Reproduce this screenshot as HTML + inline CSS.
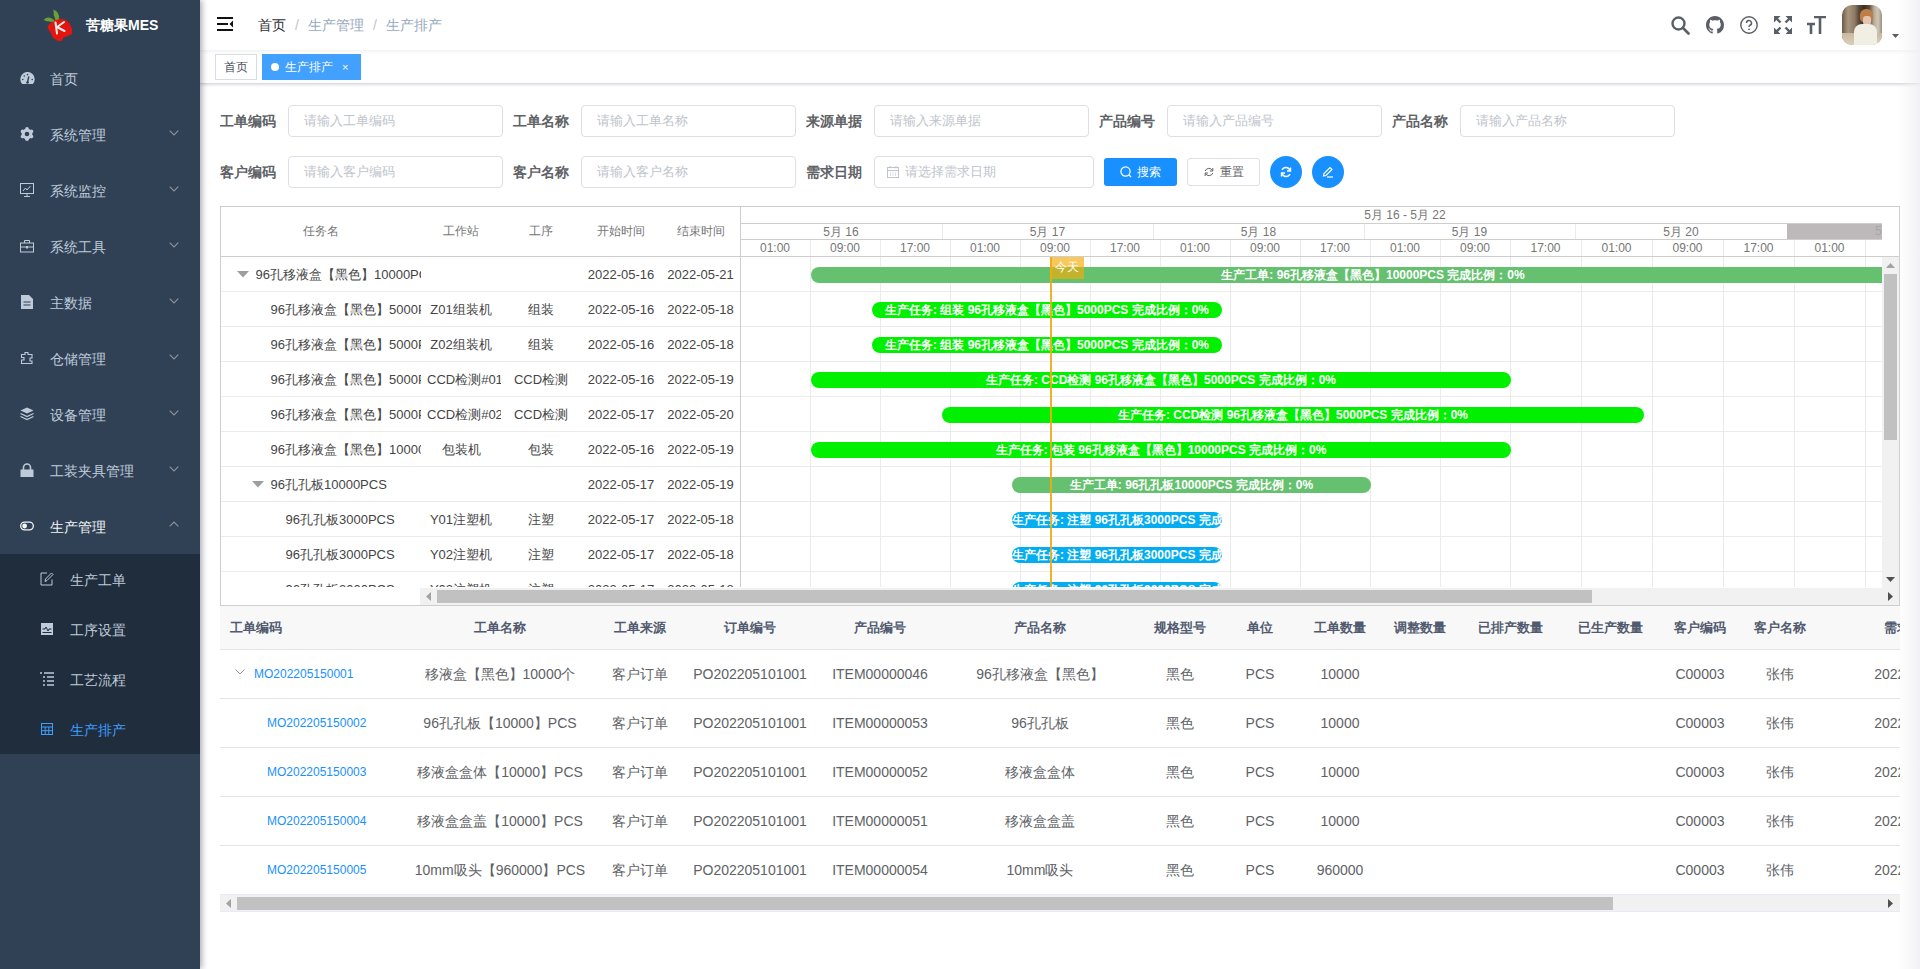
<!DOCTYPE html><html><head><meta charset="utf-8"><style>
*{margin:0;padding:0;box-sizing:border-box}
html,body{width:1920px;height:969px;overflow:hidden;background:#fff;font-family:"Liberation Sans",sans-serif;color:#606266;font-size:14px}
.a{position:absolute}
.nw{white-space:nowrap}
#side{position:absolute;left:0;top:0;width:200px;height:969px;background:#304156;box-shadow:2px 0 6px rgba(0,21,41,.35);z-index:5}
.mi{position:absolute;left:0;width:200px;height:56px;color:#bfcbd9;font-size:14px;line-height:56px}
.mi .t{position:absolute;left:50px;top:1px}
.mi svg.ic{position:absolute;left:20px;top:21px}
.mi .arr{position:absolute;left:169px;top:24px;width:10px;height:6px}
.smi{position:absolute;left:0;width:200px;height:50px;color:#bfcbd9;font-size:14px;line-height:50px}
.smi .t{position:absolute;left:70px;top:1px}
.smi svg.ic{position:absolute;left:40px;top:18px}
#nav{position:absolute;left:200px;top:0;width:1720px;height:50px;background:#fff;box-shadow:0 1px 4px rgba(0,21,41,.08);z-index:3}
#tags{position:absolute;left:200px;top:50px;width:1720px;height:34px;background:#fff;border-bottom:1px solid #d8dce5;box-shadow:0 1px 3px 0 rgba(0,0,0,.12),0 0 3px 0 rgba(0,0,0,.04);z-index:2}
.lbl{position:absolute;font-weight:bold;font-size:14px;color:#606266;line-height:32px;white-space:nowrap}
.inp{position:absolute;height:32px;border:1px solid #dcdfe6;border-radius:4px;background:#fff;font-size:13px;color:#c0c4cc;line-height:30px;padding-left:15px;white-space:nowrap}
.g{position:absolute;overflow:hidden}
.gh{color:#767676;font-size:12px;position:absolute;white-space:nowrap}
.gc{color:#454545;font-size:13px;position:absolute;white-space:nowrap;overflow:hidden}
.bar{position:absolute;height:16px;border-radius:8px;color:#fff;font-weight:bold;font-size:12px;line-height:16px;text-align:center;white-space:nowrap;overflow:hidden}
.th{position:absolute;font-weight:bold;font-size:13px;color:#515a6e;white-space:nowrap;line-height:43px}
.td{position:absolute;font-size:14px;color:#606266;white-space:nowrap;line-height:50px}
</style></head><body>
<div id="side">
<svg class="a" style="left:38px;top:5px" width="40" height="40" viewBox="0 0 40 40">
<path d="M11 19.5 L16 15 L21 13.5 L28 15 L32 19 L34 24 L34 29 L30 31 L25.5 32.5 L24 36 L20 36 L15 33 L12.5 27.5 L10 23.5 L9.5 21Z" fill="#e2160f"/>
<path d="M15.5 4.5 Q21.5 7 21 13.5 Q19.5 15.5 17.5 15 Q15 10 15.5 4.5Z" fill="#66a336"/>
<path d="M5.5 15 Q10 10.5 15.5 14.5 L16.5 16.5 Q10 17.5 5.5 15Z" fill="#66a336"/>
<path d="M17.5 17.5 L19 28.5 M18.5 22.5 L26 17 M19 22 L26.5 26" stroke="#f3eeee" stroke-width="2" fill="none" stroke-linecap="round"/>
</svg>
<div class="a nw" style="left:86px;top:16px;color:#fff;font-weight:bold;font-size:14px;line-height:18px">苦糖果MES</div>
<div class="mi" style="top:50px"><svg class="ic" style="top:22px" width="15" height="13" viewBox="0 0 15 13"><path d="M2.2 12 A7.2 7.2 0 1 1 12.8 12 Z" fill="#bfcbd9"/><path d="M7.5 10.5 L8.8 4.5" stroke="#304156" stroke-width="1.4"/><circle cx="7.5" cy="10.5" r="1.3" fill="#304156"/><circle cx="2.8" cy="7.5" r=".8" fill="#304156"/><circle cx="4.3" cy="4" r=".8" fill="#304156"/><circle cx="12.2" cy="7.5" r=".8" fill="#304156"/><circle cx="7.5" cy="2.6" r=".8" fill="#304156"/></svg><span class="t">首页</span></div>
<div class="mi" style="top:106px"><svg class="ic" width="14" height="14" viewBox="0 0 14 14"><circle cx="7" cy="7" r="5.4" fill="#bfcbd9"/><g fill="#bfcbd9"><circle cx="7" cy="1.8" r="1.8"/><circle cx="7" cy="12.2" r="1.8"/><circle cx="2.5" cy="4.4" r="1.8"/><circle cx="11.5" cy="4.4" r="1.8"/><circle cx="2.5" cy="9.6" r="1.8"/><circle cx="11.5" cy="9.6" r="1.8"/></g><circle cx="7" cy="7" r="2.3" fill="#304156"/></svg><span class="t">系统管理</span><svg class="arr" viewBox="0 0 10 6"><path d="M0.7 0.7 L5 5 L9.3 0.7" fill="none" stroke="#909399" stroke-width="1.1"/></svg></div>
<div class="mi" style="top:162px"><svg class="ic" width="14" height="14" viewBox="0 0 14 14"><rect x="0.5" y="0.5" width="13" height="10" fill="none" stroke="#bfcbd9"/><path d="M3 8 L5.5 5 L7 7 L10.5 3" stroke="#bfcbd9" fill="none"/><path d="M7 11 V13 M4 13.5 H10" stroke="#bfcbd9"/></svg><span class="t">系统监控</span><svg class="arr" viewBox="0 0 10 6"><path d="M0.7 0.7 L5 5 L9.3 0.7" fill="none" stroke="#909399" stroke-width="1.1"/></svg></div>
<div class="mi" style="top:218px"><svg class="ic" width="14" height="14" viewBox="0 0 14 14"><rect x="0.5" y="4" width="13" height="9" fill="none" stroke="#bfcbd9"/><path d="M4.5 4 V1.5 H9.5 V4 M0.5 8 H13.5" stroke="#bfcbd9" fill="none"/><rect x="6" y="7" width="2" height="2.5" fill="#bfcbd9"/></svg><span class="t">系统工具</span><svg class="arr" viewBox="0 0 10 6"><path d="M0.7 0.7 L5 5 L9.3 0.7" fill="none" stroke="#909399" stroke-width="1.1"/></svg></div>
<div class="mi" style="top:274px"><svg class="ic" width="14" height="14" viewBox="0 0 14 14"><path d="M1 0 H9 L13 4 V14 H1Z" fill="#bfcbd9"/><path d="M3.5 7 H10.5 M3.5 10 H10.5" stroke="#304156" stroke-width="1.2"/></svg><span class="t">主数据</span><svg class="arr" viewBox="0 0 10 6"><path d="M0.7 0.7 L5 5 L9.3 0.7" fill="none" stroke="#909399" stroke-width="1.1"/></svg></div>
<div class="mi" style="top:330px"><svg class="ic" width="14" height="14" viewBox="0 0 14 14"><path d="M1.5 3.5 H5 V1.5 H8 V3.5 H12 V7 H10 V10 H12 V12.5 H1.5 V9 H4 V6.5 H1.5Z" fill="none" stroke="#bfcbd9" stroke-width="1.1"/></svg><span class="t">仓储管理</span><svg class="arr" viewBox="0 0 10 6"><path d="M0.7 0.7 L5 5 L9.3 0.7" fill="none" stroke="#909399" stroke-width="1.1"/></svg></div>
<div class="mi" style="top:386px"><svg class="ic" width="14" height="14" viewBox="0 0 14 14"><path d="M7 0.5 L13.5 3.5 L7 6.5 L0.5 3.5Z" fill="#bfcbd9"/><path d="M0.5 6.5 L7 9.5 L13.5 6.5 M0.5 9.5 L7 12.5 L13.5 9.5" stroke="#bfcbd9" fill="none" stroke-width="1.3"/></svg><span class="t">设备管理</span><svg class="arr" viewBox="0 0 10 6"><path d="M0.7 0.7 L5 5 L9.3 0.7" fill="none" stroke="#909399" stroke-width="1.1"/></svg></div>
<div class="mi" style="top:442px"><svg class="ic" width="14" height="14" viewBox="0 0 14 14"><path d="M3.5 7 V4.5 A3.5 3.5 0 0 1 10.5 4.5 V7" stroke="#bfcbd9" stroke-width="1.6" fill="none"/><rect x="0.5" y="6.5" width="13" height="7.5" fill="#bfcbd9"/></svg><span class="t">工装夹具管理</span><svg class="arr" viewBox="0 0 10 6"><path d="M0.7 0.7 L5 5 L9.3 0.7" fill="none" stroke="#909399" stroke-width="1.1"/></svg></div>
<div class="mi" style="top:498px;color:#f4f4f5"><svg class="ic" width="14" height="14" viewBox="0 0 14 14"><rect x="0.7" y="3.2" width="12.6" height="7.6" rx="3.8" fill="none" stroke="#f4f4f5" stroke-width="1.3"/><circle cx="4.6" cy="7" r="2.4" fill="#f4f4f5"/></svg><span class="t">生产管理</span><svg class="arr" style="top:23px" viewBox="0 0 10 6"><path d="M0.7 5.3 L5 1 L9.3 5.3" fill="none" stroke="#909399" stroke-width="1.1"/></svg></div>
<div class="a" style="left:0;top:554px;width:200px;height:200px;background:#1f2d3d"></div>
<div class="smi" style="top:554px;color:#bfcbd9"><svg class="ic" width="14" height="14" viewBox="0 0 14 14"><path d="M12 7.5 V13 H1 V1 H7" fill="none" stroke="#bfcbd9"/><path d="M5 9.5 L5.5 7 L11.5 1 L13 2.5 L7 8.5Z" fill="none" stroke="#bfcbd9"/></svg><span class="t">生产工单</span></div>
<div class="smi" style="top:604px;color:#bfcbd9"><svg class="ic" width="14" height="14" viewBox="0 0 14 14"><rect x="1" y="1" width="12" height="12" fill="#bfcbd9"/><path d="M2.5 7 H5 L6 5 L8 9 L9 7 H11.5" stroke="#1f2d3d" fill="none"/><path d="M2.5 10.5 H11.5" stroke="#1f2d3d"/></svg><span class="t">工序设置</span></div>
<div class="smi" style="top:654px;color:#bfcbd9"><svg class="ic" width="14" height="14" viewBox="0 0 14 14"><path d="M0 1 H2 M4 1 H14 M3 5 H5 M7 5 H14 M3 9 H5 M7 9 H14 M3 13 H5 M7 13 H14" stroke="#bfcbd9" stroke-width="1.3"/></svg><span class="t">工艺流程</span></div>
<div class="smi" style="top:704px;color:#409eff"><svg class="ic" style="left:41px;top:19px" width="12" height="12" viewBox="0 0 12 12"><rect x="0.5" y="0.5" width="11" height="11" fill="none" stroke="#409eff" stroke-width="1"/><path d="M0.5 4 H11.5 M0.5 7.7 H11.5 M4.2 4 V11.5 M7.8 4 V11.5" stroke="#409eff" stroke-width="1"/></svg><span class="t">生产排产</span></div>
</div>
<div id="nav">
<svg class="a" style="left:17px;top:17px" width="16" height="14" viewBox="0 0 16 14"><path d="M0 1 H16 M0 7 H11 M0 13 H16" stroke="#111" stroke-width="2"/><path d="M16 3.5 L12.5 7 L16 10.5Z" fill="#111"/></svg>
<div class="a nw" style="left:58px;top:16px;font-size:14px;line-height:18px"><span style="color:#303133">首页</span><span style="color:#c0c4cc;margin:0 9px">/</span><span style="color:#97a8be">生产管理</span><span style="color:#c0c4cc;margin:0 9px">/</span><span style="color:#97a8be">生产排产</span></div>
<svg class="a" style="left:1471px;top:16px" width="19" height="19" viewBox="0 0 19 19"><circle cx="7.5" cy="7.5" r="6" fill="none" stroke="#5a5e66" stroke-width="2.4"/><path d="M12 12 L17.5 17.5" stroke="#5a5e66" stroke-width="2.6" stroke-linecap="round"/></svg>
<svg class="a" style="left:1506px;top:16px" width="18" height="18" viewBox="0 0 16 16"><path fill="#5a5e66" d="M8 0C3.58 0 0 3.58 0 8c0 3.54 2.29 6.53 5.47 7.59.4.07.55-.17.55-.38 0-.19-.01-.82-.01-1.49-2.01.37-2.53-.49-2.69-.94-.09-.23-.48-.94-.82-1.13-.28-.15-.68-.52-.01-.53.63-.01 1.08.58 1.23.82.72 1.21 1.87.87 2.33.66.07-.52.28-.87.51-1.07-1.78-.2-3.64-.89-3.640-3.95 0-.87.31-1.59.82-2.15-.08-.2-.36-1.02.08-2.12 0 0 .67-.21 2.200.82.64-.18 1.32-.27 2-.27.68 0 1.36.09 2 .27 1.53-1.04 2.2-.82 2.2-.82.44 1.1.16 1.92.08 2.12.51.56.82 1.27.82 2.15 0 3.07-1.87 3.75-3.65 3.95.29.25.54.73.54 1.48 0 1.07-.01 1.93-.01 2.2 0 .21.15.46.55.38A8.013 8.013 0 0016 8c0-4.42-3.58-8-8-8z"/></svg>
<svg class="a" style="left:1540px;top:16px" width="18" height="18" viewBox="0 0 18 18"><circle cx="9" cy="9" r="8.2" fill="none" stroke="#5a5e66" stroke-width="1.4"/><path d="M6.5 7 A2.5 2.5 0 1 1 9.8 9.3 Q9 9.7 9 11" fill="none" stroke="#5a5e66" stroke-width="1.5"/><circle cx="9" cy="13.3" r="0.9" fill="#5a5e66"/></svg>
<svg class="a" style="left:1574px;top:16px" width="18" height="18" viewBox="0 0 18 18"><g stroke="#5a5e66" stroke-width="2.4" fill="none"><path d="M2 2 L6.5 6.5 M16 2 L11.5 6.5 M2 16 L6.5 11.5 M16 16 L11.5 11.5"/></g><g fill="#5a5e66"><path d="M0 0 H6.5 L0 6.5Z M18 0 H11.5 L18 6.5Z M0 18 H6.5 L0 11.5Z M18 18 H11.5 L18 11.5Z"/></g></svg>
<svg class="a" style="left:1607px;top:16px" width="19" height="18" viewBox="0 0 19 18"><path d="M7 1 H19 M13 1 V18 M0 8 H8 M4 8 V18" stroke="#5a5e66" stroke-width="2.6" fill="none"/></svg>
<div class="a" style="left:1642px;top:5px;width:40px;height:40px;border-radius:10px;overflow:hidden;background:linear-gradient(90deg,#6a5a48 0%,#a8967e 15%,#8c7a64 32%,#5a4a3a 42%,#3a2e22 55%,#5a4c3c 68%,#b8ac98 80%,#d0c8b8 90%,#9a9080 100%)"><div class="a" style="left:0;top:28px;width:40px;height:12px;background:linear-gradient(180deg,#c8b8a0,#dccfbb)"></div><div class="a" style="left:18px;top:4px;width:13px;height:13px;border-radius:6px 6px 4px 4px;background:#bf7d48"></div><div class="a" style="left:21px;top:11px;width:8px;height:9px;border-radius:3px;background:#e2c4b0"></div><div class="a" style="left:12px;top:19px;width:23px;height:22px;border-radius:8px 8px 0 0;background:#f1eee3"></div></div>
<svg class="a" style="left:1692px;top:34px" width="7" height="4" viewBox="0 0 7 4"><path d="M0 0 H7 L3.5 4Z" fill="#5a5e66"/></svg>
</div>
<div id="tags">
<div class="a nw" style="left:15px;top:4px;width:42px;height:26px;border:1px solid #d8dce5;color:#495060;font-size:12px;line-height:24px;text-align:center">首页</div>
<div class="a nw" style="left:62px;top:4px;width:99px;height:26px;background:#42a0ff;border:1px solid #42a0ff;color:#fff;font-size:12px;line-height:24px"><span class="a" style="left:8px;top:8px;width:8px;height:8px;border-radius:4px;background:#fff"></span><span class="a" style="left:22px;top:0">生产排产</span><span class="a" style="left:79px;top:0;font-size:11px">×</span></div>
</div>
<div class="lbl" style="left:220px;top:105px">工单编码</div>
<div class="inp" style="left:288px;top:105px;width:215px">请输入工单编码</div>
<div class="lbl" style="left:513px;top:105px">工单名称</div>
<div class="inp" style="left:581px;top:105px;width:215px">请输入工单名称</div>
<div class="lbl" style="left:806px;top:105px">来源单据</div>
<div class="inp" style="left:874px;top:105px;width:215px">请输入来源单据</div>
<div class="lbl" style="left:1099px;top:105px">产品编号</div>
<div class="inp" style="left:1167px;top:105px;width:215px">请输入产品编号</div>
<div class="lbl" style="left:1392px;top:105px">产品名称</div>
<div class="inp" style="left:1460px;top:105px;width:215px">请输入产品名称</div>
<div class="lbl" style="left:220px;top:156px">客户编码</div>
<div class="inp" style="left:288px;top:156px;width:215px">请输入客户编码</div>
<div class="lbl" style="left:513px;top:156px">客户名称</div>
<div class="inp" style="left:581px;top:156px;width:215px">请输入客户名称</div>
<div class="lbl" style="left:806px;top:156px">需求日期</div>
<div class="inp" style="left:874px;top:156px;width:220px;padding-left:30px">请选择需求日期<svg class="a" style="left:12px;top:9px" width="12" height="12" viewBox="0 0 12 12"><rect x="0.5" y="1.5" width="11" height="10" fill="none" stroke="#c0c4cc"/><path d="M0.5 4.5 H11.5 M3 7 H4 M5.5 7 H6.5 M8 7 H9 M3 9 H4 M5.5 9 H6.5 M8 9 H9 M3 0 V2.5 M9 0 V2.5" stroke="#c0c4cc"/></svg></div>
<div class="a nw" style="left:1104px;top:158px;width:73px;height:28px;border-radius:3px;background:#1890ff;color:#fff;font-size:12px;line-height:28px"><svg class="a" style="left:16px;top:8px" width="12" height="12" viewBox="0 0 12 12"><circle cx="5.5" cy="5.5" r="4.6" fill="none" stroke="#fff" stroke-width="1.2"/><path d="M9 9 L11 11" stroke="#fff" stroke-width="1.2"/></svg><span class="a" style="left:33px;top:0">搜索</span></div>
<div class="a nw" style="left:1187px;top:158px;width:73px;height:28px;border-radius:3px;border:1px solid #dcdfe6;background:#fff;color:#606266;font-size:12px;line-height:26px"><svg class="a" style="left:16px;top:8px" width="10" height="10" viewBox="0 0 10 10"><path d="M8.5 3.5 A4 4 0 0 0 1.2 4 M1.5 6.5 A4 4 0 0 0 8.8 6" fill="none" stroke="#606266" stroke-width="1"/><path d="M8.8 1 V4 H6 M1.2 9 V6 H4" fill="none" stroke="#606266" stroke-width="1"/></svg><span class="a" style="left:32px;top:0">重置</span></div>
<div class="a" style="left:1270px;top:156px;width:32px;height:32px;border-radius:16px;background:#1890ff"><svg class="a" style="left:10px;top:10px" width="12" height="12" viewBox="0 0 12 12"><path d="M10 4.5 A4.3 4.3 0 0 0 2 4 M2 7.5 A4.3 4.3 0 0 0 10 8" fill="none" stroke="#fff" stroke-width="1.4"/><path d="M10.5 1.5 V5 H7 M1.5 10.5 V7 H5" fill="none" stroke="#fff" stroke-width="1.4"/></svg></div>
<div class="a" style="left:1312px;top:156px;width:32px;height:32px;border-radius:16px;background:#1890ff"><svg class="a" style="left:10px;top:10px" width="12" height="12" viewBox="0 0 12 12"><path d="M1.5 10 L2 7.5 L8 1.5 L10 3.5 L4 9.5Z" fill="none" stroke="#fff" stroke-width="1.2"/><path d="M5 11 H11" stroke="#fff" stroke-width="1.2"/></svg></div>
<div class="a" style="left:220px;top:206px;width:1680px;height:400px;border:1px solid #cecece;background:#fff"></div>
<div class="gh" style="left:270.5px;width:100px;text-align:center;top:223px;line-height:16px">任务名</div>
<div class="gh" style="left:411px;width:100px;text-align:center;top:223px;line-height:16px">工作站</div>
<div class="gh" style="left:491px;width:100px;text-align:center;top:223px;line-height:16px">工序</div>
<div class="gh" style="left:571px;width:100px;text-align:center;top:223px;line-height:16px">开始时间</div>
<div class="gh" style="left:650.5px;width:100px;text-align:center;top:223px;line-height:16px">结束时间</div>
<div class="a" style="left:221px;top:256px;width:1678px;height:1px;background:#cecece"></div>
<div class="a" style="left:741px;top:223px;width:1141px;height:1px;background:#cecece"></div>
<div class="a" style="left:741px;top:239px;width:1141px;height:1px;background:#cecece"></div>
<div class="g" style="left:0;top:0;width:1882px;height:256px">
<div class="a" style="left:1787px;top:224px;width:95px;height:15px;background:#bdb9ba"></div>
<div class="gh" style="left:1875px;top:223px;line-height:16px;color:#a9a5a6">5</div>
<div class="gh" style="left:1305px;width:200px;text-align:center;top:207px;line-height:16px">5月 16 - 5月 22</div>
<div class="gh" style="left:791.0px;width:100px;text-align:center;top:224px;line-height:16px">5月 16</div>
<div class="a" style="left:942px;top:224px;width:1px;height:15px;background:#ebebeb"></div>
<div class="gh" style="left:997.5px;width:100px;text-align:center;top:224px;line-height:16px">5月 17</div>
<div class="a" style="left:1153px;top:224px;width:1px;height:15px;background:#ebebeb"></div>
<div class="gh" style="left:1208.5px;width:100px;text-align:center;top:224px;line-height:16px">5月 18</div>
<div class="a" style="left:1364px;top:224px;width:1px;height:15px;background:#ebebeb"></div>
<div class="gh" style="left:1419.5px;width:100px;text-align:center;top:224px;line-height:16px">5月 19</div>
<div class="a" style="left:1575px;top:224px;width:1px;height:15px;background:#ebebeb"></div>
<div class="gh" style="left:1631.0px;width:100px;text-align:center;top:224px;line-height:16px">5月 20</div>
<div class="gh" style="left:735.0px;width:80px;text-align:center;top:240px;line-height:16px">01:00</div>
<div class="a" style="left:810px;top:240px;width:1px;height:16px;background:#ebebeb"></div>
<div class="gh" style="left:805.0px;width:80px;text-align:center;top:240px;line-height:16px">09:00</div>
<div class="a" style="left:880px;top:240px;width:1px;height:16px;background:#ebebeb"></div>
<div class="gh" style="left:875.0px;width:80px;text-align:center;top:240px;line-height:16px">17:00</div>
<div class="a" style="left:950px;top:240px;width:1px;height:16px;background:#ebebeb"></div>
<div class="gh" style="left:945.0px;width:80px;text-align:center;top:240px;line-height:16px">01:00</div>
<div class="a" style="left:1020px;top:240px;width:1px;height:16px;background:#ebebeb"></div>
<div class="gh" style="left:1015.0px;width:80px;text-align:center;top:240px;line-height:16px">09:00</div>
<div class="a" style="left:1090px;top:240px;width:1px;height:16px;background:#ebebeb"></div>
<div class="gh" style="left:1085.0px;width:80px;text-align:center;top:240px;line-height:16px">17:00</div>
<div class="a" style="left:1160px;top:240px;width:1px;height:16px;background:#ebebeb"></div>
<div class="gh" style="left:1155.0px;width:80px;text-align:center;top:240px;line-height:16px">01:00</div>
<div class="a" style="left:1230px;top:240px;width:1px;height:16px;background:#ebebeb"></div>
<div class="gh" style="left:1225.0px;width:80px;text-align:center;top:240px;line-height:16px">09:00</div>
<div class="a" style="left:1300px;top:240px;width:1px;height:16px;background:#ebebeb"></div>
<div class="gh" style="left:1295.0px;width:80px;text-align:center;top:240px;line-height:16px">17:00</div>
<div class="a" style="left:1370px;top:240px;width:1px;height:16px;background:#ebebeb"></div>
<div class="gh" style="left:1365.0px;width:80px;text-align:center;top:240px;line-height:16px">01:00</div>
<div class="a" style="left:1440px;top:240px;width:1px;height:16px;background:#ebebeb"></div>
<div class="gh" style="left:1435.0px;width:80px;text-align:center;top:240px;line-height:16px">09:00</div>
<div class="a" style="left:1510px;top:240px;width:1px;height:16px;background:#ebebeb"></div>
<div class="gh" style="left:1505.5px;width:80px;text-align:center;top:240px;line-height:16px">17:00</div>
<div class="a" style="left:1581px;top:240px;width:1px;height:16px;background:#ebebeb"></div>
<div class="gh" style="left:1576.5px;width:80px;text-align:center;top:240px;line-height:16px">01:00</div>
<div class="a" style="left:1652px;top:240px;width:1px;height:16px;background:#ebebeb"></div>
<div class="gh" style="left:1647.5px;width:80px;text-align:center;top:240px;line-height:16px">09:00</div>
<div class="a" style="left:1723px;top:240px;width:1px;height:16px;background:#ebebeb"></div>
<div class="gh" style="left:1718.5px;width:80px;text-align:center;top:240px;line-height:16px">17:00</div>
<div class="a" style="left:1794px;top:240px;width:1px;height:16px;background:#ebebeb"></div>
<div class="gh" style="left:1789.5px;width:80px;text-align:center;top:240px;line-height:16px">01:00</div>
<div class="a" style="left:1865px;top:240px;width:1px;height:16px;background:#ebebeb"></div>
<div class="gh" style="left:1860.5px;width:80px;text-align:center;top:240px;line-height:16px">09:00</div>
</div>
<div class="a" style="left:1882px;top:207px;width:17px;height:49px;background:#fff"></div>
<div class="g" style="left:221px;top:257px;width:1661px;height:330px">
<div class="a" style="left:589px;top:0;width:1px;height:331px;background:#ebebeb"></div>
<div class="a" style="left:659px;top:0;width:1px;height:331px;background:#ebebeb"></div>
<div class="a" style="left:729px;top:0;width:1px;height:331px;background:#ebebeb"></div>
<div class="a" style="left:799px;top:0;width:1px;height:331px;background:#ebebeb"></div>
<div class="a" style="left:869px;top:0;width:1px;height:331px;background:#ebebeb"></div>
<div class="a" style="left:939px;top:0;width:1px;height:331px;background:#ebebeb"></div>
<div class="a" style="left:1009px;top:0;width:1px;height:331px;background:#ebebeb"></div>
<div class="a" style="left:1079px;top:0;width:1px;height:331px;background:#ebebeb"></div>
<div class="a" style="left:1149px;top:0;width:1px;height:331px;background:#ebebeb"></div>
<div class="a" style="left:1219px;top:0;width:1px;height:331px;background:#ebebeb"></div>
<div class="a" style="left:1289px;top:0;width:1px;height:331px;background:#ebebeb"></div>
<div class="a" style="left:1360px;top:0;width:1px;height:331px;background:#ebebeb"></div>
<div class="a" style="left:1431px;top:0;width:1px;height:331px;background:#ebebeb"></div>
<div class="a" style="left:1502px;top:0;width:1px;height:331px;background:#ebebeb"></div>
<div class="a" style="left:1573px;top:0;width:1px;height:331px;background:#ebebeb"></div>
<div class="a" style="left:1644px;top:0;width:1px;height:331px;background:#ebebeb"></div>
<div class="a" style="left:0;top:34px;width:1661px;height:1px;background:#ebebeb"></div>
<svg class="a" style="left:16.0px;top:14px" width="12" height="7" viewBox="0 0 12 7"><path d="M0 0 H12 L6 6.5Z" fill="#9e9e9e"/></svg>
<div class="gc" style="left:34.5px;top:0px;width:165.5px;line-height:35px">96孔移液盒【黑色】10000PCS</div>
<div class="gc" style="left:360px;top:0px;width:80px;line-height:35px;text-align:center;overflow:visible">2022-05-16</div>
<div class="gc" style="left:440px;top:0px;width:79px;line-height:35px;text-align:center;overflow:visible">2022-05-21</div>
<div class="a" style="left:0;top:69px;width:1661px;height:1px;background:#ebebeb"></div>
<div class="gc" style="left:49.5px;top:35px;width:150.5px;line-height:35px">96孔移液盒【黑色】5000PCS</div>
<div class="gc" style="left:200px;top:35px;width:80px;line-height:35px;text-align:center;padding:0 6px;overflow:hidden">Z01组装机</div>
<div class="gc" style="left:280px;top:35px;width:80px;line-height:35px;text-align:center;padding:0 6px;overflow:visible">组装</div>
<div class="gc" style="left:360px;top:35px;width:80px;line-height:35px;text-align:center;overflow:visible">2022-05-16</div>
<div class="gc" style="left:440px;top:35px;width:79px;line-height:35px;text-align:center;overflow:visible">2022-05-18</div>
<div class="a" style="left:0;top:104px;width:1661px;height:1px;background:#ebebeb"></div>
<div class="gc" style="left:49.5px;top:70px;width:150.5px;line-height:35px">96孔移液盒【黑色】5000PCS</div>
<div class="gc" style="left:200px;top:70px;width:80px;line-height:35px;text-align:center;padding:0 6px;overflow:hidden">Z02组装机</div>
<div class="gc" style="left:280px;top:70px;width:80px;line-height:35px;text-align:center;padding:0 6px;overflow:visible">组装</div>
<div class="gc" style="left:360px;top:70px;width:80px;line-height:35px;text-align:center;overflow:visible">2022-05-16</div>
<div class="gc" style="left:440px;top:70px;width:79px;line-height:35px;text-align:center;overflow:visible">2022-05-18</div>
<div class="a" style="left:0;top:139px;width:1661px;height:1px;background:#ebebeb"></div>
<div class="gc" style="left:49.5px;top:105px;width:150.5px;line-height:35px">96孔移液盒【黑色】5000PCS</div>
<div class="gc" style="left:200px;top:105px;width:80px;line-height:35px;text-align:center;padding:0 6px;overflow:hidden">CCD检测#01</div>
<div class="gc" style="left:280px;top:105px;width:80px;line-height:35px;text-align:center;padding:0 6px;overflow:visible">CCD检测</div>
<div class="gc" style="left:360px;top:105px;width:80px;line-height:35px;text-align:center;overflow:visible">2022-05-16</div>
<div class="gc" style="left:440px;top:105px;width:79px;line-height:35px;text-align:center;overflow:visible">2022-05-19</div>
<div class="a" style="left:0;top:174px;width:1661px;height:1px;background:#ebebeb"></div>
<div class="gc" style="left:49.5px;top:140px;width:150.5px;line-height:35px">96孔移液盒【黑色】5000PCS</div>
<div class="gc" style="left:200px;top:140px;width:80px;line-height:35px;text-align:center;padding:0 6px;overflow:hidden">CCD检测#02</div>
<div class="gc" style="left:280px;top:140px;width:80px;line-height:35px;text-align:center;padding:0 6px;overflow:visible">CCD检测</div>
<div class="gc" style="left:360px;top:140px;width:80px;line-height:35px;text-align:center;overflow:visible">2022-05-17</div>
<div class="gc" style="left:440px;top:140px;width:79px;line-height:35px;text-align:center;overflow:visible">2022-05-20</div>
<div class="a" style="left:0;top:209px;width:1661px;height:1px;background:#ebebeb"></div>
<div class="gc" style="left:49.5px;top:175px;width:150.5px;line-height:35px">96孔移液盒【黑色】10000PCS</div>
<div class="gc" style="left:200px;top:175px;width:80px;line-height:35px;text-align:center;padding:0 6px;overflow:hidden">包装机</div>
<div class="gc" style="left:280px;top:175px;width:80px;line-height:35px;text-align:center;padding:0 6px;overflow:visible">包装</div>
<div class="gc" style="left:360px;top:175px;width:80px;line-height:35px;text-align:center;overflow:visible">2022-05-16</div>
<div class="gc" style="left:440px;top:175px;width:79px;line-height:35px;text-align:center;overflow:visible">2022-05-19</div>
<div class="a" style="left:0;top:244px;width:1661px;height:1px;background:#ebebeb"></div>
<svg class="a" style="left:31.0px;top:224px" width="12" height="7" viewBox="0 0 12 7"><path d="M0 0 H12 L6 6.5Z" fill="#9e9e9e"/></svg>
<div class="gc" style="left:49.5px;top:210px;width:150.5px;line-height:35px">96孔孔板10000PCS</div>
<div class="gc" style="left:360px;top:210px;width:80px;line-height:35px;text-align:center;overflow:visible">2022-05-17</div>
<div class="gc" style="left:440px;top:210px;width:79px;line-height:35px;text-align:center;overflow:visible">2022-05-19</div>
<div class="a" style="left:0;top:279px;width:1661px;height:1px;background:#ebebeb"></div>
<div class="gc" style="left:64.5px;top:245px;width:135.5px;line-height:35px">96孔孔板3000PCS</div>
<div class="gc" style="left:200px;top:245px;width:80px;line-height:35px;text-align:center;padding:0 6px;overflow:hidden">Y01注塑机</div>
<div class="gc" style="left:280px;top:245px;width:80px;line-height:35px;text-align:center;padding:0 6px;overflow:visible">注塑</div>
<div class="gc" style="left:360px;top:245px;width:80px;line-height:35px;text-align:center;overflow:visible">2022-05-17</div>
<div class="gc" style="left:440px;top:245px;width:79px;line-height:35px;text-align:center;overflow:visible">2022-05-18</div>
<div class="a" style="left:0;top:314px;width:1661px;height:1px;background:#ebebeb"></div>
<div class="gc" style="left:64.5px;top:280px;width:135.5px;line-height:35px">96孔孔板3000PCS</div>
<div class="gc" style="left:200px;top:280px;width:80px;line-height:35px;text-align:center;padding:0 6px;overflow:hidden">Y02注塑机</div>
<div class="gc" style="left:280px;top:280px;width:80px;line-height:35px;text-align:center;padding:0 6px;overflow:visible">注塑</div>
<div class="gc" style="left:360px;top:280px;width:80px;line-height:35px;text-align:center;overflow:visible">2022-05-17</div>
<div class="gc" style="left:440px;top:280px;width:79px;line-height:35px;text-align:center;overflow:visible">2022-05-18</div>
<div class="a" style="left:0;top:349px;width:1661px;height:1px;background:#ebebeb"></div>
<div class="gc" style="left:64.5px;top:315px;width:135.5px;line-height:35px">96孔孔板3000PCS</div>
<div class="gc" style="left:200px;top:315px;width:80px;line-height:35px;text-align:center;padding:0 6px;overflow:hidden">Y03注塑机</div>
<div class="gc" style="left:280px;top:315px;width:80px;line-height:35px;text-align:center;padding:0 6px;overflow:visible">注塑</div>
<div class="gc" style="left:360px;top:315px;width:80px;line-height:35px;text-align:center;overflow:visible">2022-05-17</div>
<div class="gc" style="left:440px;top:315px;width:79px;line-height:35px;text-align:center;overflow:visible">2022-05-18</div>
<div class="bar" style="left:590px;top:10px;width:1124px;background:#65c16f;border-radius:8px">生产工单: 96孔移液盒【黑色】10000PCS 完成比例：0%</div>
<div class="bar" style="left:651px;top:45px;width:350px;background:#00f000;border-radius:8px">生产任务: 组装 96孔移液盒【黑色】5000PCS 完成比例：0%</div>
<div class="bar" style="left:651px;top:80px;width:350px;background:#00f000;border-radius:8px">生产任务: 组装 96孔移液盒【黑色】5000PCS 完成比例：0%</div>
<div class="bar" style="left:590px;top:115px;width:700px;background:#00f000;border-radius:8px">生产任务: CCD检测 96孔移液盒【黑色】5000PCS 完成比例：0%</div>
<div class="bar" style="left:721px;top:150px;width:702px;background:#00f000;border-radius:8px">生产任务: CCD检测 96孔移液盒【黑色】5000PCS 完成比例：0%</div>
<div class="bar" style="left:590px;top:185px;width:700px;background:#00f000;border-radius:8px">生产任务: 包装 96孔移液盒【黑色】10000PCS 完成比例：0%</div>
<div class="bar" style="left:791px;top:220px;width:359px;background:#65c16f;border-radius:8px">生产工单: 96孔孔板10000PCS 完成比例：0%</div>
<div class="bar" style="left:791px;top:255px;width:210px;background:#03adf0;border-radius:8px">生产任务: 注塑 96孔孔板3000PCS 完成比例：0%</div>
<div class="bar" style="left:791px;top:290px;width:210px;background:#03adf0;border-radius:8px">生产任务: 注塑 96孔孔板3000PCS 完成比例：0%</div>
<div class="bar" style="left:791px;top:325px;width:210px;background:#03adf0;border-radius:8px">生产任务: 注塑 96孔孔板3000PCS 完成比例：0%</div>
<div class="a" style="left:829px;top:0;width:2px;height:331px;background:rgba(240,170,20,.9)"></div>
<div class="a nw" style="left:829px;top:0;width:34px;height:22px;background:rgba(244,172,9,.66);color:#fff;font-size:12px;line-height:20px;text-align:center">今天</div>
</div>
<div class="a" style="left:740px;top:207px;width:1px;height:380px;background:#cecece"></div>
<div class="a" style="left:1882px;top:257px;width:17px;height:331px;background:#f1f1f1"></div>
<svg class="a" style="left:1886px;top:263px" width="9" height="5" viewBox="0 0 9 5"><path d="M0 5 H9 L4.5 0Z" fill="#a3a3a3"/></svg>
<div class="a" style="left:1884px;top:274px;width:13px;height:166px;background:#c1c1c1"></div>
<svg class="a" style="left:1886px;top:577px" width="9" height="5" viewBox="0 0 9 5"><path d="M0 0 H9 L4.5 5Z" fill="#505050"/></svg>
<div class="a" style="left:420px;top:588px;width:1479px;height:17px;background:#f1f1f1"></div>
<svg class="a" style="left:426px;top:592px" width="5" height="9" viewBox="0 0 5 9"><path d="M5 0 V9 L0 4.5Z" fill="#a3a3a3"/></svg>
<div class="a" style="left:437px;top:590px;width:1155px;height:13px;background:#c1c1c1"></div>
<svg class="a" style="left:1888px;top:592px" width="5" height="9" viewBox="0 0 5 9"><path d="M0 0 V9 L5 4.5Z" fill="#505050"/></svg>
<div class="a" style="left:220px;top:606px;width:1680px;height:44px;background:#f8f8f9;border-bottom:1px solid #dfe6ec"></div>
<div class="g" style="left:220px;top:606px;width:1680px;height:306px">
<div class="th" style="left:10px;top:0">工单编码</div>
<div class="th" style="left:220px;width:120px;text-align:center;top:0">工单名称</div>
<div class="th" style="left:360px;width:120px;text-align:center;top:0">工单来源</div>
<div class="th" style="left:470px;width:120px;text-align:center;top:0">订单编号</div>
<div class="th" style="left:600px;width:120px;text-align:center;top:0">产品编号</div>
<div class="th" style="left:760px;width:120px;text-align:center;top:0">产品名称</div>
<div class="th" style="left:900px;width:120px;text-align:center;top:0">规格型号</div>
<div class="th" style="left:980px;width:120px;text-align:center;top:0">单位</div>
<div class="th" style="left:1060px;width:120px;text-align:center;top:0">工单数量</div>
<div class="th" style="left:1140px;width:120px;text-align:center;top:0">调整数量</div>
<div class="th" style="left:1230px;width:120px;text-align:center;top:0">已排产数量</div>
<div class="th" style="left:1330px;width:120px;text-align:center;top:0">已生产数量</div>
<div class="th" style="left:1420px;width:120px;text-align:center;top:0">客户编码</div>
<div class="th" style="left:1500px;width:120px;text-align:center;top:0">客户名称</div>
<div class="th" style="left:1630px;width:120px;text-align:center;top:0">需求日期</div>
<div class="a" style="left:0;top:92px;width:1680px;height:1px;background:#dfe6ec"></div>
<svg class="a" style="left:15px;top:63px" width="10" height="6" viewBox="0 0 10 6"><path d="M0.5 0.5 L5 5 L9.5 0.5" fill="none" stroke="#909399" stroke-width="1"/></svg>
<div class="td" style="left:34px;top:43px;color:#1890ff;font-size:12px">MO202205150001</div>
<div class="td" style="left:180px;width:200px;text-align:center;top:43px">移液盒【黑色】10000个</div>
<div class="td" style="left:320px;width:200px;text-align:center;top:43px">客户订单</div>
<div class="td" style="left:430px;width:200px;text-align:center;top:43px">PO202205101001</div>
<div class="td" style="left:560px;width:200px;text-align:center;top:43px">ITEM00000046</div>
<div class="td" style="left:720px;width:200px;text-align:center;top:43px">96孔移液盒【黑色】</div>
<div class="td" style="left:860px;width:200px;text-align:center;top:43px">黑色</div>
<div class="td" style="left:940px;width:200px;text-align:center;top:43px">PCS</div>
<div class="td" style="left:1020px;width:200px;text-align:center;top:43px">10000</div>
<div class="td" style="left:1380px;width:200px;text-align:center;top:43px">C00003</div>
<div class="td" style="left:1460px;width:200px;text-align:center;top:43px">张伟</div>
<div class="td" style="left:1590px;width:200px;text-align:center;top:43px">2022-05-30</div>
<div class="a" style="left:0;top:141px;width:1680px;height:1px;background:#dfe6ec"></div>
<div class="td" style="left:47px;top:92px;color:#1890ff;font-size:12px">MO202205150002</div>
<div class="td" style="left:180px;width:200px;text-align:center;top:92px">96孔孔板【10000】PCS</div>
<div class="td" style="left:320px;width:200px;text-align:center;top:92px">客户订单</div>
<div class="td" style="left:430px;width:200px;text-align:center;top:92px">PO202205101001</div>
<div class="td" style="left:560px;width:200px;text-align:center;top:92px">ITEM00000053</div>
<div class="td" style="left:720px;width:200px;text-align:center;top:92px">96孔孔板</div>
<div class="td" style="left:860px;width:200px;text-align:center;top:92px">黑色</div>
<div class="td" style="left:940px;width:200px;text-align:center;top:92px">PCS</div>
<div class="td" style="left:1020px;width:200px;text-align:center;top:92px">10000</div>
<div class="td" style="left:1380px;width:200px;text-align:center;top:92px">C00003</div>
<div class="td" style="left:1460px;width:200px;text-align:center;top:92px">张伟</div>
<div class="td" style="left:1590px;width:200px;text-align:center;top:92px">2022-05-30</div>
<div class="a" style="left:0;top:190px;width:1680px;height:1px;background:#dfe6ec"></div>
<div class="td" style="left:47px;top:141px;color:#1890ff;font-size:12px">MO202205150003</div>
<div class="td" style="left:180px;width:200px;text-align:center;top:141px">移液盒盒体【10000】PCS</div>
<div class="td" style="left:320px;width:200px;text-align:center;top:141px">客户订单</div>
<div class="td" style="left:430px;width:200px;text-align:center;top:141px">PO202205101001</div>
<div class="td" style="left:560px;width:200px;text-align:center;top:141px">ITEM00000052</div>
<div class="td" style="left:720px;width:200px;text-align:center;top:141px">移液盒盒体</div>
<div class="td" style="left:860px;width:200px;text-align:center;top:141px">黑色</div>
<div class="td" style="left:940px;width:200px;text-align:center;top:141px">PCS</div>
<div class="td" style="left:1020px;width:200px;text-align:center;top:141px">10000</div>
<div class="td" style="left:1380px;width:200px;text-align:center;top:141px">C00003</div>
<div class="td" style="left:1460px;width:200px;text-align:center;top:141px">张伟</div>
<div class="td" style="left:1590px;width:200px;text-align:center;top:141px">2022-05-30</div>
<div class="a" style="left:0;top:239px;width:1680px;height:1px;background:#dfe6ec"></div>
<div class="td" style="left:47px;top:190px;color:#1890ff;font-size:12px">MO202205150004</div>
<div class="td" style="left:180px;width:200px;text-align:center;top:190px">移液盒盒盖【10000】PCS</div>
<div class="td" style="left:320px;width:200px;text-align:center;top:190px">客户订单</div>
<div class="td" style="left:430px;width:200px;text-align:center;top:190px">PO202205101001</div>
<div class="td" style="left:560px;width:200px;text-align:center;top:190px">ITEM00000051</div>
<div class="td" style="left:720px;width:200px;text-align:center;top:190px">移液盒盒盖</div>
<div class="td" style="left:860px;width:200px;text-align:center;top:190px">黑色</div>
<div class="td" style="left:940px;width:200px;text-align:center;top:190px">PCS</div>
<div class="td" style="left:1020px;width:200px;text-align:center;top:190px">10000</div>
<div class="td" style="left:1380px;width:200px;text-align:center;top:190px">C00003</div>
<div class="td" style="left:1460px;width:200px;text-align:center;top:190px">张伟</div>
<div class="td" style="left:1590px;width:200px;text-align:center;top:190px">2022-05-30</div>
<div class="a" style="left:0;top:288px;width:1680px;height:1px;background:#dfe6ec"></div>
<div class="td" style="left:47px;top:239px;color:#1890ff;font-size:12px">MO202205150005</div>
<div class="td" style="left:180px;width:200px;text-align:center;top:239px">10mm吸头【960000】PCS</div>
<div class="td" style="left:320px;width:200px;text-align:center;top:239px">客户订单</div>
<div class="td" style="left:430px;width:200px;text-align:center;top:239px">PO202205101001</div>
<div class="td" style="left:560px;width:200px;text-align:center;top:239px">ITEM00000054</div>
<div class="td" style="left:720px;width:200px;text-align:center;top:239px">10mm吸头</div>
<div class="td" style="left:860px;width:200px;text-align:center;top:239px">黑色</div>
<div class="td" style="left:940px;width:200px;text-align:center;top:239px">PCS</div>
<div class="td" style="left:1020px;width:200px;text-align:center;top:239px">960000</div>
<div class="td" style="left:1380px;width:200px;text-align:center;top:239px">C00003</div>
<div class="td" style="left:1460px;width:200px;text-align:center;top:239px">张伟</div>
<div class="td" style="left:1590px;width:200px;text-align:center;top:239px">2022-05-30</div>
</div>
<div class="a" style="left:220px;top:894px;width:1680px;height:18px;background:#f1f1f1;border-top:1px solid #e6ebf5;border-bottom:1px solid #e6ebf5"></div>
<svg class="a" style="left:226px;top:899px" width="5" height="9" viewBox="0 0 5 9"><path d="M5 0 V9 L0 4.5Z" fill="#a3a3a3"/></svg>
<div class="a" style="left:237px;top:897px;width:1376px;height:13px;background:#c1c1c1"></div>
<svg class="a" style="left:1888px;top:899px" width="5" height="9" viewBox="0 0 5 9"><path d="M0 0 V9 L5 4.5Z" fill="#505050"/></svg>
<div class="a" style="left:1898px;top:0;width:22px;height:969px;z-index:10;background:linear-gradient(90deg,rgba(238,238,242,0) 0%,rgba(238,238,242,.75) 100%)"></div>
</body></html>
